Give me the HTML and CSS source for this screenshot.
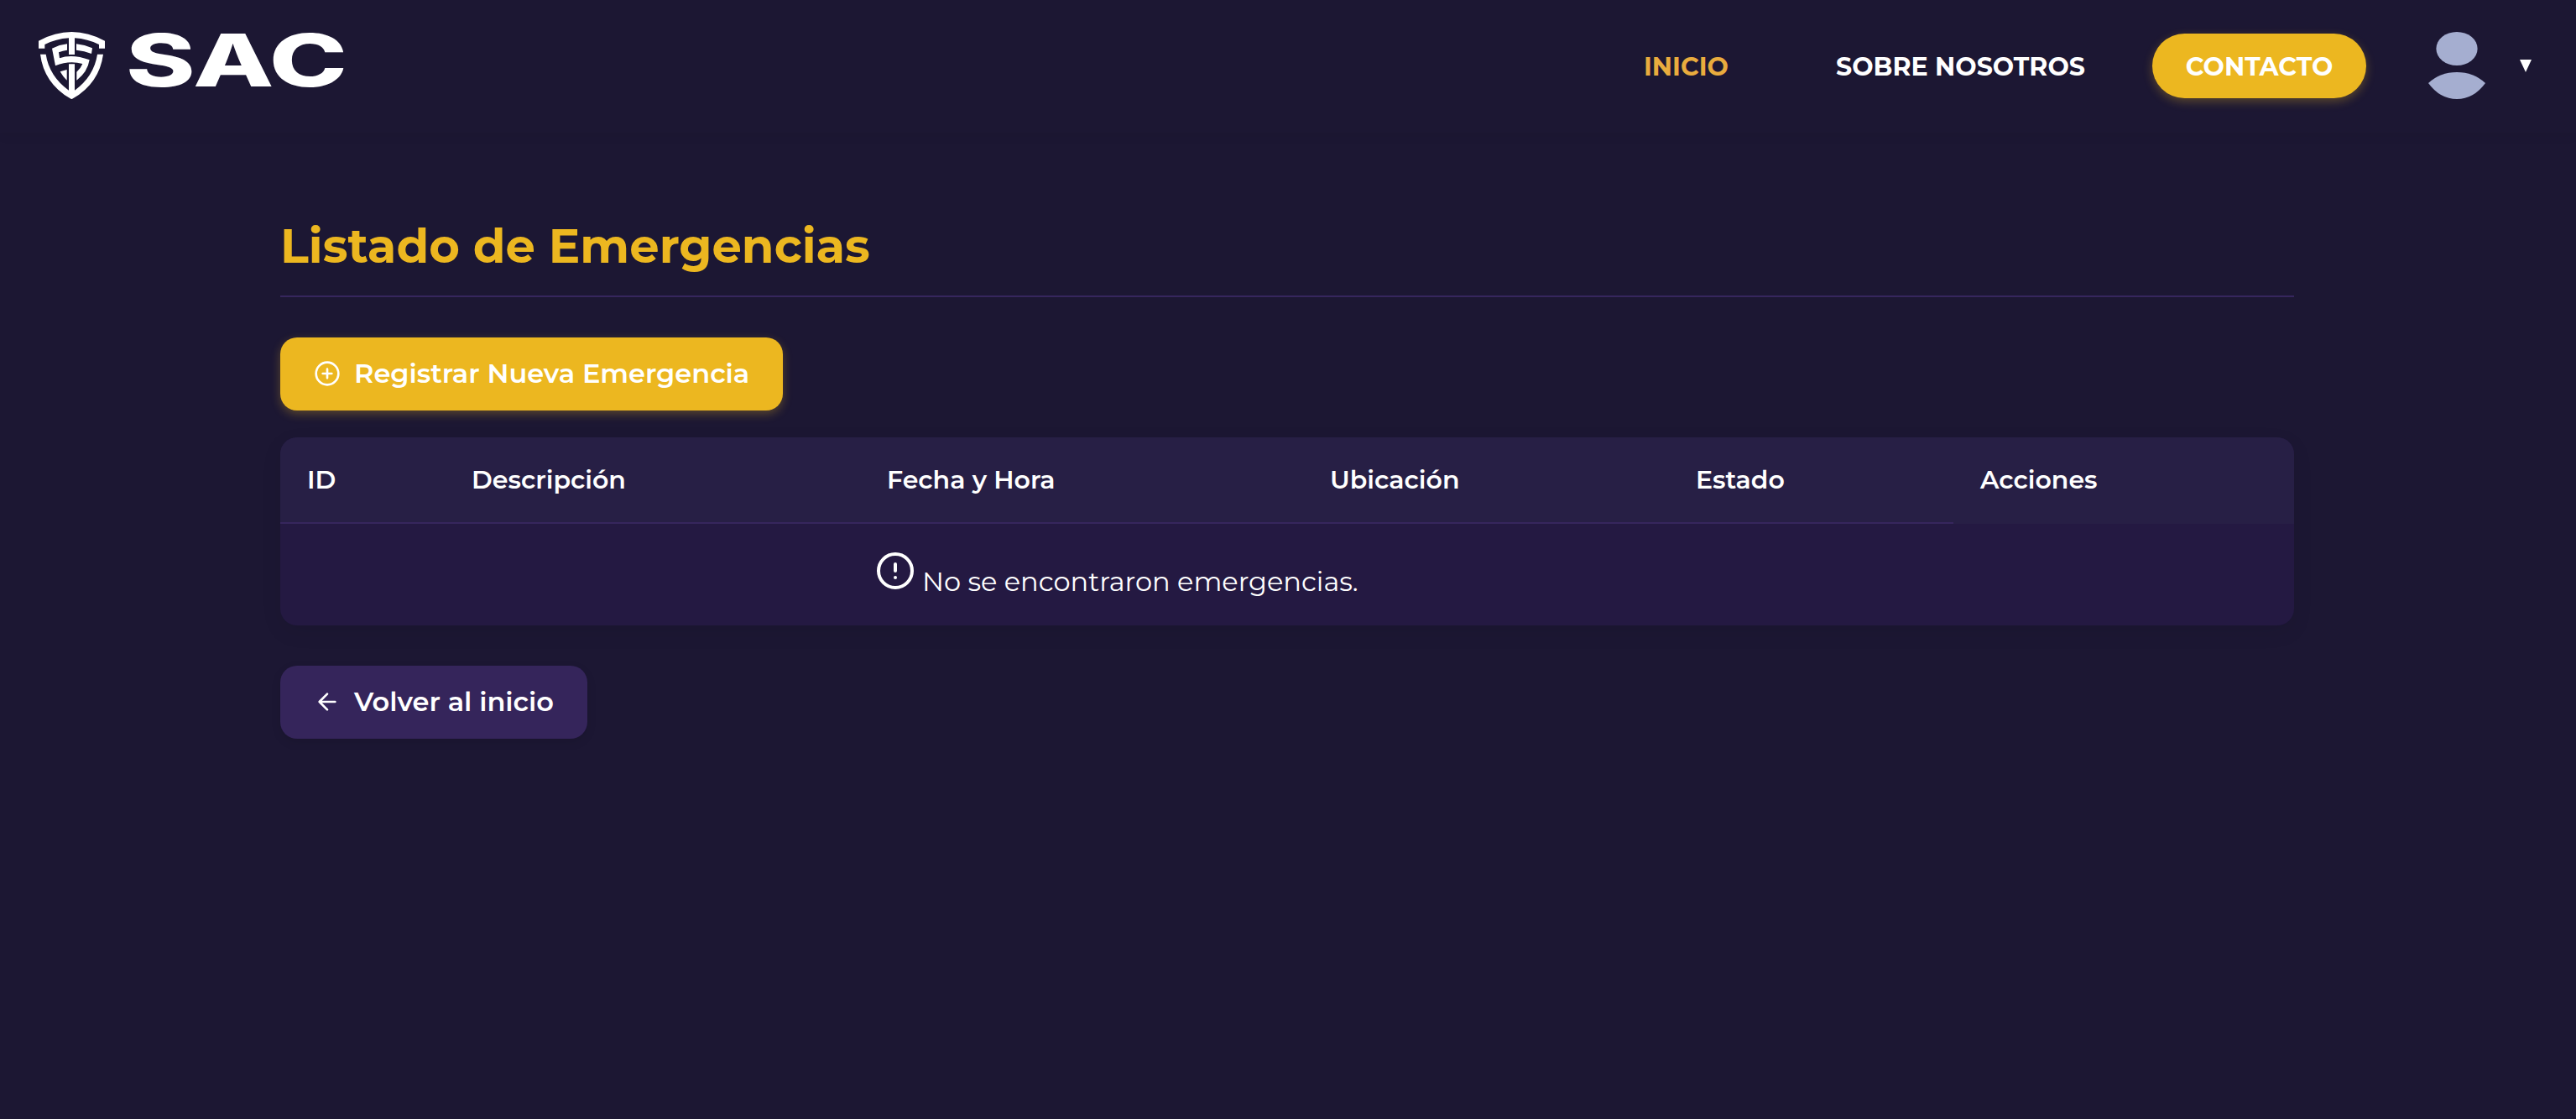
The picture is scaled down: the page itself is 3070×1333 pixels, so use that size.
FILE: index.html
```html
<!DOCTYPE html>
<html lang="es">
<head>
<meta charset="utf-8">
<title>SAC - Listado de Emergencias</title>
<link rel="stylesheet" href="styles.css">
</head>
<body>
<header class="header">
  <div class="brand">
    <svg class="shield" viewBox="0 0 300 300" fill="#fff">
      <path d="M30 56Q148-8 267 56V83H246V69Q205 49 159 46V105H138V46Q92 49 52 69V83H30Z"/>
      <path d="M36 104H56Q68 182 138 233V139H159V233Q228 182 240 104H261Q247 207 153 262Q148 266 143 262Q49 207 36 104Z"/>
      <path d="M78 83Q104 70 132 67V89Q117 91 102 97L105 118Q150 102 212 124Q205 168 166 197V167Q181 154 187 138Q140 124 90 145Z"/>
      <path d="M165 67Q195 70 222 82L219 102Q194 91 165 89Z"/>
      <path d="M107 166L131 159V197Q117 184 107 166Z"/>
    </svg>
    <svg class="wordmark" viewBox="0 0 270 80"><text x="-3" y="66.5" textLength="264" lengthAdjust="spacingAndGlyphs">SAC</text></svg>
  </div>
  <nav class="nav">
    <a class="link active">INICIO</a>
    <a class="link about">SOBRE NOSOTROS</a>
    <a class="contact">CONTACTO</a>
    <svg class="avatar" viewBox="0 0 80 80" fill="#a5aed0"><ellipse cx="40" cy="20" rx="24.6" ry="20"/><path d="M6 61Q20 48 40 48T74 61Q60 80 40 80T6 61Z"/></svg>
    <svg class="caret" viewBox="0 0 14 15"><path d="M0 0H14L7 15Z" fill="#fff"/></svg>
  </nav>
</header>
<main class="main">
  <h1 class="title">Listado de Emergencias</h1>
  <a class="btn primary">
    <svg class="icon" viewBox="0 0 24 24"><circle cx="12" cy="12" r="10"/><path d="M12 8v8M8 12h8"/></svg>
    <span>Registrar Nueva Emergencia</span>
  </a>
  <table class="table">
    <colgroup><col class="c-id"><col class="c-desc"><col class="c-date"><col class="c-place"><col class="c-state"><col></colgroup>
    <thead><tr>
      <th>ID</th><th>Descripción</th><th>Fecha y Hora</th><th>Ubicación</th><th>Estado</th><th>Acciones</th>
    </tr></thead>
    <tbody><tr>
      <td colspan="5"><div class="empty"><svg class="icon alert" viewBox="0 0 24 24"><circle cx="12" cy="12" r="10"/><path d="M12 8v4M12 16h.01"/></svg><span>No se encontraron emergencias.</span></div></td><td></td>
    </tr></tbody>
  </table>
  <a class="btn secondary">
    <svg class="icon" viewBox="0 0 24 24"><path d="M19 12H5M12 19l-7-7 7-7"/></svg>
    <span>Volver al inicio</span>
  </a>
</main>
</body>
</html>
```
FILE: styles.css
```css
* { box-sizing: border-box; }
body { margin: 0; min-height: 1333px; background: #1c1733; color: #fff; font-family: Montserrat, Inter, sans-serif; }

.header { display: flex; justify-content: space-between; height: 158px; padding: 0 53px 0 36px; box-shadow: 0 4px 12px rgba(0, 0, 0, .05); }
.brand { display: flex; align-items: flex-start; gap: 17px; padding-top: 30px; }
.shield { width: 100px; height: 100px; }
.wordmark { width: 270px; height: 80px; margin-top: 6px; overflow: visible; }
.wordmark text { font: 800 86px Inter, sans-serif; fill: #fff; }

.nav { display: flex; align-items: center; height: 157px; font-size: 30px; font-weight: 700; white-space: nowrap; }
.link { width: 104px; padding-top: 1px; }
.link.about { width: 298px; margin: 0 79px 0 125px; }
.active { color: #e9ac3e; }
.contact { display: flex; align-items: center; justify-content: center; width: 255px; height: 77px; padding-top: 1px; border-radius: 39px; background: #ecb720; box-shadow: 0 4px 12px rgba(236, 183, 32, .3); }
.avatar { width: 80px; height: 80px; margin: 0 35px 1px 68px; }
.caret { width: 14px; height: 15px; }

.main { display: flex; flex-direction: column; align-items: flex-start; width: 2400px; margin: 0 336px 0 334px; padding-top: 96px; }
.title { width: 100%; height: 100px; margin: 0 0 48px; padding-top: 6px; border-bottom: 2px solid #36265d; color: #ecb720; font-size: 56px; font-weight: 700; line-height: 66px; }
.btn { display: flex; align-items: center; gap: 16px; height: 87px; padding: 0 40px 2px; border-radius: 20px; font-size: 32px; font-weight: 600; white-space: nowrap; }
.primary { width: 599px; background: #ecb720; box-shadow: 0 4px 12px rgba(236, 183, 32, .3); }
.secondary { width: 366px; background: #35255b; box-shadow: 0 4px 12px rgba(0, 0, 0, .1); }
.icon { width: 32px; height: 32px; flex: none; fill: none; stroke: #fff; stroke-width: 2; stroke-linecap: round; stroke-linejoin: round; }

.table { width: 2400px; margin: 32px 0 48px; border-spacing: 0; table-layout: fixed; border-radius: 20px; overflow: hidden; background: #241942; box-shadow: 0 8px 24px rgba(0, 0, 0, .08); }
.c-id { width: 196px; }
.c-desc { width: 495px; }
.c-date { width: 528px; }
.c-place { width: 436px; }
.c-state { width: 339px; }
.table th { height: 103px; padding: 0 0 0 32px; background: #271f45; border-bottom: 2px solid #36265d; text-align: left; font-size: 30px; font-weight: 600; }
.table th:last-child { border-bottom-color: #271f45; }
.table td { height: 121px; padding: 0; vertical-align: top; }
.empty { display: flex; gap: 8px; padding: 32px 0 0 709px; font-size: 32px; font-weight: 400; line-height: 38px; }
.empty span { margin-top: 18px; }
.alert { width: 48px; height: 48px; }
```
